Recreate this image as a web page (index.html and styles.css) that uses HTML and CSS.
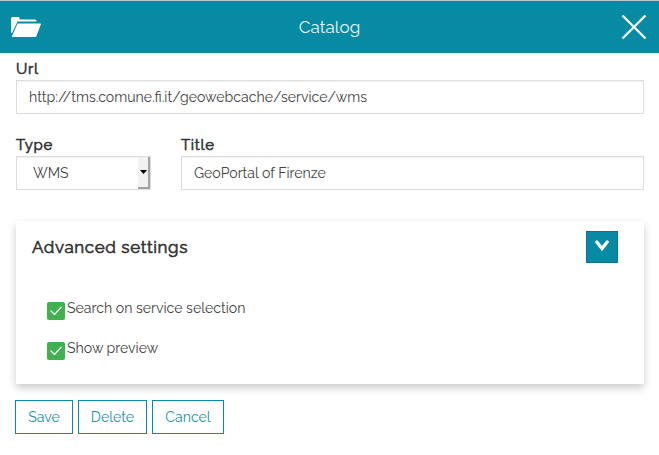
FILE: index.html
```html
<!DOCTYPE html>
<html lang="en">
<head>
<meta charset="utf-8">
<title>Catalog</title>
<link rel="stylesheet" href="styles.css">
</head>
<body>
<header class="header">
  <svg class="folder" width="32" height="24" viewBox="0 0 32 24"><path d="M1 18V3.500Q1 2 2.500 2H8.500Q9.500 2 9.500 3V4.500H25Q26.500 4.500 26.500 6V6.500H7.500L2 18Z" fill="#fff"/><path d="M7.500 8.500H30.500Q31.200 8.500 30.900 9.300L26.500 21Q26.200 22 25.200 22H2.500Q1.500 22 2 21Z" fill="#fff"/></svg>
  <h1 class="header-title">Catalog</h1>
  <svg class="close" width="26" height="26" viewBox="0 0 26 26"><path d="M1.500 1.500 24.500 24.500M24.500 1.500 1.500 24.500" stroke="#fff" stroke-width="2.200" fill="none"/></svg>
</header>
<main class="content">
  <div class="field">
    <label class="label">Url</label>
    <div class="control">http://tms.comune.fi.it/geowebcache/service/wms</div>
  </div>
  <div class="row">
    <div class="field field-type">
      <label class="label">Type</label>
      <div class="control select"><span>WMS</span><span class="select-button"><svg width="7" height="4" viewBox="0 0 7 4"><path d="M0 0H7L3.500 4Z" fill="#000"/></svg></span></div>
    </div>
    <div class="field field-title">
      <label class="label">Title</label>
      <div class="control">GeoPortal of Firenze</div>
    </div>
  </div>
  <section class="panel">
    <div class="panel-head">
      <h2 class="panel-title">Advanced settings</h2>
      <div class="toggle"><svg class="chevron" width="16" height="14" viewBox="0 0 16 14"><path d="M2.800 3 8 9.500 13.200 3" stroke="#fff" stroke-width="3.300" stroke-linecap="round" fill="none"/></svg></div>
    </div>
    <div class="check"><svg class="box" width="18" height="18" viewBox="0 0 18 18"><rect width="18" height="18" rx="2" fill="#3fb24f"/><path d="M3.500 8.500 7.500 12.500 14.500 5" stroke="#fff" stroke-width="1.200" fill="none"/></svg><span>Search on service selection</span></div>
    <div class="check"><svg class="box" width="18" height="18" viewBox="0 0 18 18"><rect width="18" height="18" rx="2" fill="#3fb24f"/><path d="M3.500 8.500 7.500 12.500 14.500 5" stroke="#fff" stroke-width="1.200" fill="none"/></svg><span>Show preview</span></div>
  </section>
  <div class="buttons">
    <div class="button save">Save</div>
    <div class="button delete">Delete</div>
    <div class="button cancel">Cancel</div>
  </div>
</main>
</body>
</html>
```
FILE: styles.css
```css
* { box-sizing: border-box; }
body {
  margin: 0;
  background: #fff;
  color: #444;
  font: 14.1px/20px Raleway, Lato, sans-serif;
  white-space: nowrap;
}
.header {
  height: 53px;
  background: #078aa3;
  border-top: 1px solid #b5cbd1;
  color: #e8f6f8;
  display: grid;
  grid-template-columns: 60px 1fr 60px;
  align-items: center;
}
.folder { margin: -1px 0 0 10px; }
.header-title {
  margin: 0;
  font-size: 17px;
  font-weight: 400;
  letter-spacing: .05px;
  text-align: center;
}
.close { margin-left: 22px; }
.content { padding: 7px 15px 0 16px; }
.label {
  display: block;
  height: 20px;
  line-height: 19px;
  font-size: 15px;
  font-weight: 400;
  -webkit-text-stroke: .6px #333;
  color: #333;
  letter-spacing: .7px;
}
.control {
  height: 34px;
  border: 1px solid #ddd;
  box-shadow: inset 0 1px 1px rgba(0, 0, 0, .06);
  padding: 6px 12px;
}
.row { display: flex; gap: 30px; margin-top: 22px; }
.field-type { width: 135px; }
.field-title { flex: 1; }
.select {
  display: flex;
  justify-content: space-between;
  padding: 6px 0 0 16px;
}
.select-button {
  width: 12px;
  height: 32px;
  margin: -6px 0 0;
  background: #f1f2f4;
  border-right: 2px solid #a2a2a2;
  border-bottom: 2px solid #a2a2a2;
  display: grid;
  place-items: center;
}
.panel {
  height: 163px;
  margin-top: 31px;
  background: #fff;
  box-shadow: 0 4px 8px rgba(0, 0, 0, .2);
}
.panel-head {
  height: 67px;
  padding: 10px 26px 0 16px;
  display: flex;
  justify-content: space-between;
}
.panel-title {
  margin: 5px 0 0;
  font-size: 17px;
  line-height: 22px;
  font-weight: 400;
  -webkit-text-stroke: .6px #333;
  color: #333;
  letter-spacing: .6px;
}
.toggle {
  width: 32px;
  height: 32px;
  background: #078aa3;
  border: 1px solid #06778d;
  display: grid;
  place-items: center;
}
.chevron { margin-top: -2px; }
.check { display: flex; height: 40px; padding: 10px 0 0 31px; gap: 2px; }
.box { margin-top: 4px; }
.buttons { display: flex; gap: 5px; margin: 16px 0 0 -1px; }
.button {
  height: 34px;
  border: 1px solid #078aa3;
  color: #1894ab;
  line-height: 32px;
  text-align: center;
}
.save { width: 58px; }
.delete { width: 69px; }
.cancel { width: 72px; }
```
